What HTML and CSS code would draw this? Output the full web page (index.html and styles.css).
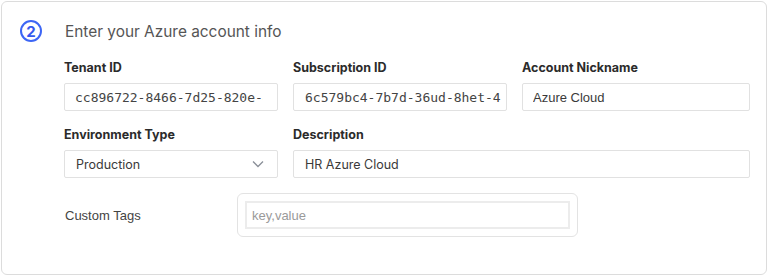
FILE: index.html
```html
<!DOCTYPE html>
<html lang="en">
<head>
    <meta charset="UTF-8">
    <meta name="viewport" content="width=device-width, initial-scale=1.0">
    <title>Azure Account</title>
    <link rel="stylesheet" href="styles.css">
</head>
<body>
    <div class="card">
        <div class="step-header">
            <span class="step-number">2</span>
            <h2>Enter your Azure account info</h2>
        </div>
        <div class="form">
            <div class="field-grid">
                <div class="field">
                    <label>Tenant ID</label>
                    <input class="mono" type="text" value="cc896722-8466-7d25-820e-4a1b9c3d2e10">
                </div>
                <div class="field">
                    <label>Subscription ID</label>
                    <input class="mono tight" type="text" value="6c579bc4-7b7d-36ud-8het-4">
                </div>
                <div class="field">
                    <label>Account Nickname</label>
                    <input class="plain" type="text" value="Azure Cloud">
                </div>
                <div class="field">
                    <label>Environment Type</label>
                    <div class="select">
                        <span>Production</span>
                        <svg width="12" height="8" viewBox="0 0 12 8"><path d="M1 1.5l5 5 5-5" fill="none" stroke="#8a8f98" stroke-width="1.3"/></svg>
                    </div>
                </div>
                <div class="field wide">
                    <label>Description</label>
                    <input type="text" value="HR Azure Cloud">
                </div>
            </div>
            <div class="tags-row">
                <span class="tags-label">Custom Tags</span>
                <div class="tags-box">
                    <input class="tags-input" type="text" placeholder="key,value">
                </div>
            </div>
        </div>
    </div>
</body>
</html>
```

FILE: styles.css
```css
body {
    margin: 0;
    font-family: Inter, "Noto Sans", sans-serif;
    background: #fff;
}
.card {
    margin: 1px;
    height: 274px;
    box-sizing: border-box;
    border: 1px solid #dcdcdc;
    border-radius: 6px;
    background: #fff;
}
.step-header {
    display: flex;
    align-items: center;
    gap: 23px;
    padding: 18px 0 0 18px;
}
.step-number {
    width: 22px;
    height: 22px;
    box-sizing: border-box;
    border: 2px solid #3d66f5;
    border-radius: 50%;
    color: #3558ee;
    font-weight: 700;
    font-size: 15px;
    display: flex;
    align-items: center;
    justify-content: center;
}
.step-header h2 {
    margin: 0;
    font-size: 15.4px;
    font-weight: 400;
    color: #555;
}
.form {
    padding: 18px 0 0 62px;
}
.field-grid {
    display: grid;
    grid-template-columns: 214px 214px 228px;
    column-gap: 15px;
    row-gap: 16px;
}
.field {
    display: flex;
    flex-direction: column;
    gap: 7px;
}
.field.wide {
    grid-column: span 2;
}
.field label {
    font-size: 12.5px;
    line-height: 16px;
    font-weight: 700;
    color: #2b2b2b;
}
input {
    height: 28px;
    box-sizing: border-box;
    border: 1px solid #e1e1e1;
    border-radius: 2px;
    padding: 0 11px;
    font-family: Inter, sans-serif;
    font-size: 12.5px;
    color: #3a3a3a;
    background: #fff;
    outline: none;
}
input.mono {
    font-family: "DejaVu Sans Mono", monospace;
    font-size: 13px;
    padding: 0 14px 0 10px;
    color: #444;
}
input.mono.tight {
    padding: 0 3px 0 11px;
}
input.plain {
    font-family: "Liberation Sans", Arial, sans-serif;
    font-size: 13px;
    padding: 0 10px;
}
.select {
    height: 28px;
    box-sizing: border-box;
    border: 1px solid #e1e1e1;
    border-radius: 2px;
    padding: 0 13px 0 11px;
    display: flex;
    align-items: center;
    justify-content: space-between;
    font-size: 12.5px;
    color: #3a3a3a;
}
.tags-row {
    display: flex;
    align-items: center;
    margin-top: 15px;
}
.tags-label {
    width: 172px;
    padding-left: 1px;
    font-family: "Liberation Sans", Arial, sans-serif;
    font-size: 13px;
    color: #444;
}
.tags-box {
    width: 341px;
    box-sizing: border-box;
    border: 1px solid #e3e3e3;
    border-radius: 6px;
    padding: 7px 7px;
}
.tags-input {
    width: 100%;
    border: 2px solid #ececec;
    border-radius: 0;
    padding: 0 5px;
    font-family: "Liberation Sans", Arial, sans-serif;
    font-size: 13px;
}
.tags-input::placeholder {
    color: #9a9a9a;
}
```
